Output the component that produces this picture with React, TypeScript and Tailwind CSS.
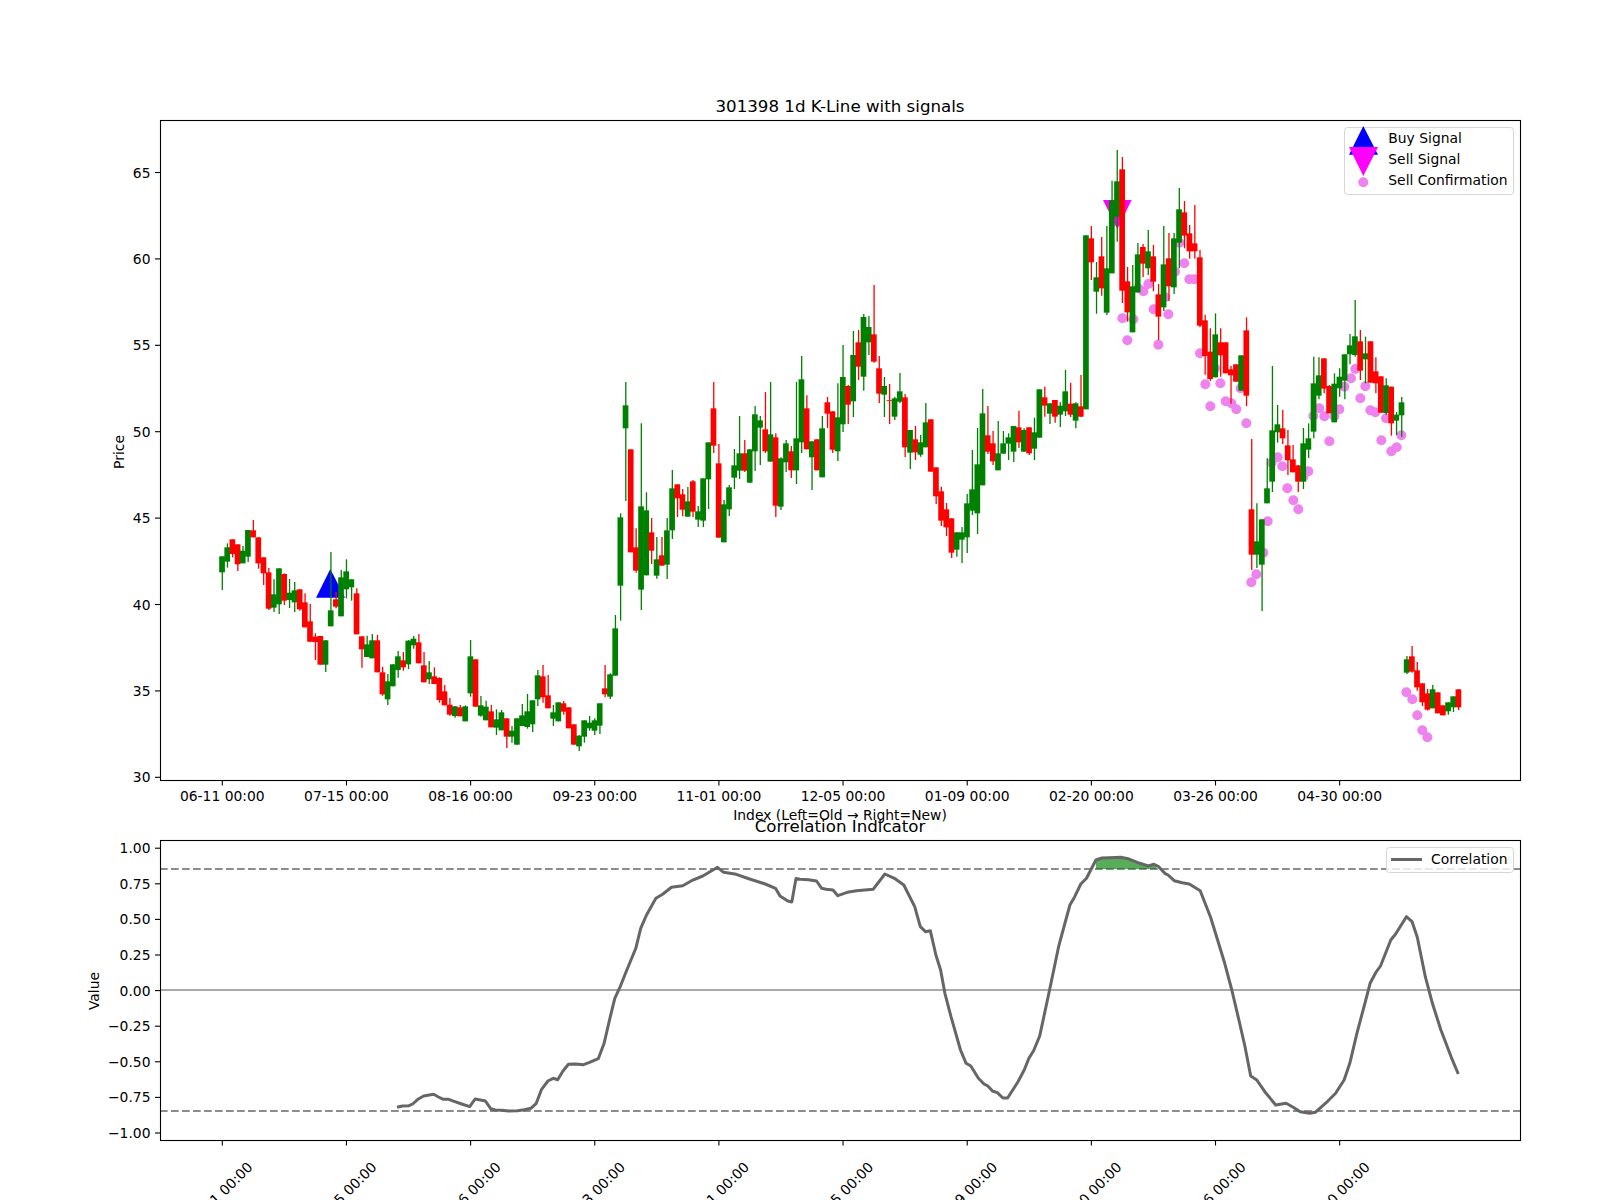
const X = (i: number) => 222.3 + 5.173 * i;

type Seg = [number, number, string];
const segs: Seg[] = [
  [480, 0, "g 229 229 277 330,g 190 202 245 263,r 178 178 222 232,r 193 193 253 273,g 198 212 250 250,g 150 150 230 246,r 120 151 172 172,r 172 172 250 266,r 232 232 280 315,r 264 277 386 390,g 298 343 383 396,g 265 265 373 402,r 280 282 362 375,g 297 338 360 384,g 306 331 367 396,r 328 328 388 392,r 340 367 442 442,r 372 424 485 487,r 460 470 486 540,r 468 468 554 554,g 480 481 554 576,g 216 391 439 439,r 336 358 380 385,g 270 292 409 409,g 238 274 328 355,g 298 298 322 362,r 325 340 463 463,r 469 469 508 563,g 467 493 531 531,g 462 481 535 535,r 465 481 577 577,r 561 577 643 647,g 582 604 658 675,g 553 553 619 619,g 513 529 570 593,r 516 541 562 572,g 480 482 553 567,g 468 476 496 506,r 462 487 550 550,r 516 556 607 607,g 543 577 598 612,r 562 589 612 612,r 592 594 660 668,r 615 634 676 676,r 654 674 704 707,g 678 679 708 713,r 675 682 709 709,g 676 679 724 724,g 480 529 640 650,r 538 538 680 680,g 648 676 707 710,g 662 680 721 721,r 675 694 742 742"],
  [640, 53, "g 208 238 263 285,g 210 217 271 271,r 235 235 290 324,g 258 272 290 308,g 235 235 314 314,g 192 226 258 258,g 162 214 261 266,g 181 181 253 276,g 90 106 178 198,r 75 109 172 188,r 105 166 205 205,g 195 217 236 258,g 187 187 244 244,r 183 190 215 224,r 202 202 265 265,r 253 253 314 314,g 285 287 319 333,g 241 241 290 308,g 228 248 265 272,g 235 241 272 285,g 190 190 257 282,r 75 145 163 172,g 100 103 170 177"],
  [340, 76, "g 825 865 1007 1007,g 520 532 737 842,g 126 196 265 483,r 328 328 637 637,r 565 622 692 698,g 250 499 749 810,g 457 511 706 706,r 534 577 632 672,g 591 658 707 716,r 591 646 677 677,g 534 571 674 717,g 390 445 571 597,r 433 433 475 531,r 447 463 509 529,g 441 484 530 530,r 420 424 515 531,g 498 514 539 561,g 415 415 542 561,g 307 307 418 507,r 126 205 317 339,r 312 370 593 593,g 480 493 607 607,g 435 442 508 528,g 327 376 413 447,g 228 340 392 417,r 300 340 392 396,g 328 328 428 428,g 198 223 334 393,g 228 241 263 375,r 156 268 334 339,g 126 283 365 365,r 280 292 497 531,g 352 355 500 510,g 300 310 367 396,r 318 334 391 414,g 126 295 391 432,g 48 118 307 339,r 166 205 328 328,g 304 304 352 450,r 298 298 391 391,g 228 265 412 412,r 171 187 221 264,r 214 214 329 339,g 130 232 334 363"],
  [280, 120, "g 195 291 433 456,r 315 318 374 432,g 153 225 364 411,r 150 187 260 300,g 102 111 290 332,g 108 141 187 225,r 15 163 245 248,r 228 265 341 369,g 291 318 344 411,r 312 360 362 432,g 350 355 410 420,g 279 334 365 369,r 342 352 502 531,g 450 450 518 567,r 438 478 517 540,g 465 487 524 530,g 369 427 502 502,r 418 418 575 575,r 562 562 649 672,r 620 634 722 738,r 669 688 742 768,r 715 715 818 834,g 757 757 809 830,g 741 757 779 849,g 642 670 772 819,g 510 628 692 705,g 444 553 700 762,g 327 400 616 616,r 378 466 515 522,r 453 490 544 555,g 423 520 571 571,g 453 490 521 521"],
  [370, 152, "g 190 202 221 270,g 168 168 245 276,r 122 172 217 234,g 175 180 245 245,r 172 172 250 255,g 143 187 236 270,g 58 58 203 203,r 50 82 107 140,g 100 100 131 162,r 90 90 140 158,g 97 107 134 171,g 0 64 124 138,r 38 101 134 141,g 97 100 152 175,r 15 109 140 141"],
  [120, 167, "g 346 346 868 868,r 318 355 427 480,g 426 472 515 581,r 351 409 505 527,g 318 445 578 585,g 182 241 460 460,g 90 184 290 365,r 111 148 512 549,r 441 484 577 605,g 435 499 637 637,g 369 403 517 517,r 372 381 431 471,g 330 394 445 465,r 375 409 485 514,r 492 523 590 660,g 318 433 562 573,r 339 415 499 543,g 339 355 502 522,g 204 268 368 445,r 243 277 347 385,r 315 340 394 416,r 255 370 394 416,r 390 412 617 622"],
  [120, 190, "r 584 601 708 764,r 625 695 777 783,g 580 643 772 772,r 625 667 706 770,r 667 667 760 760,r 738 748 766 851,r 733 733 785 785,g 706 706 812 812,r 592 631 827 858"],
  [400, 199, "r 117 328 464 510,g 310 424 464 504,g 358 358 494 633,g 175 265 310 310,g -102 91 245 276,g 15 73 97 128,r 30 85 115 132,r 90 136 181 225,r 135 178 217 217,r 196 196 245 276,g 84 130 245 267,g 70 115 149 174"],
  [120, 211, "g 710 790 935 955,g 712 766 827 838,r 715 715 806 820,r 795 798 880 880,g 760 791 907 907,g 745 770 805 830,g 703 703 782 838,g 642 676 703 733,g 540 649 705 710,r 630 664 752 780,g 650 700 718 790,r 664 664 788 788,r 712 754 790 820,r 769 769 878 878,g 775 796 879 884,r 800 800 910 947,g 876 884 902 945,g 831 847 886 950"],
  [400, 229, "g 768 778 818 822,r 738 769 815 818,r 786 811 862 872,r 850 850 907 918,r 867 880 929 932,g 855 868 925 925,r 877 877 940 940,r 916 916 946 946,g 907 907 934 944,g 889 889 922 936,r 868 868 922 930"],
];

const candles = segs.flatMap(([base, start, rows]) =>
  rows.split(",").map((row, n) => {
    const [c, hi, top, bot, lo] = row.split(" ");
    const y = (v: string) => base + Number(v) / 3;
    return { i: start + n, color: c === "g" ? "#008000" : "#ff0000", hi: y(hi), top: y(top), bot: y(bot), lo: y(lo) };
  }),
);

const dots: [number, number][] = [
  ...([[652,305],[667,595],[700,598],[682,661],[730,514],[745,492],[715,505],[761,568],[805,583],[775,674],[853,430],[868,478],[883,478],[825,455],[838,368],[795,532],[900,700]] as [number, number][]).map(([x, y]): [number, number] => [900 + x / 3, 120 + y / 3]),
  ...([[16,793],[61,790],[31,859],[77,844],[94,850],[109,868],[139,910],[45,745],[122,805],[340,888],[358,865],[373,889],[403,889],[418,868],[433,800],[453,775],[466,747],[496,799],[481,835],[511,871],[526,877],[558,895]] as [number, number][]).map(([x, y]): [number, number] => [1200 + x / 3, 120 + y / 3]),
  ...([[233,172],[215,188],[247,199],[325,214],[310,230],[262,265],[280,301],[295,328],[203,364],[190,458],[169,523],[154,547],[388,124],[544,121],[574,154],[590,142],[604,106],[619,877],[637,898],[652,946],[667,991],[682,1012]] as [number, number][]).map(([x, y]): [number, number] => [1200 + x / 3, 400 + y / 3]),
];

const z6: [number, number][] = [[710,982],[722,978],[737,977],[745,972],[757,958],[770,948],[792,943],[803,951],[814,958],[826,958],[838,964],[855,972],[873,980],[885,957],[897,960],[908,963],[920,986],[930,990],[945,991],[960,993],[980,992],[995,989],[1010,985],[1022,970],[1034,928],[1048,903],[1060,895],[1070,899],[1082,873],[1094,853],[1110,852],[1128,854],[1140,848],[1161,836],[1174,790],[1186,720],[1198,655],[1210,620],[1222,580],[1245,505],[1256,445],[1269,405],[1290,355],[1305,343],[1325,322],[1350,317],[1370,302],[1395,288],[1428,262],[1442,277],[1470,283],[1500,297],[1535,312],[1558,325],[1568,348]];
const mid: [number, number][] = [[787.8,901],[791.8,902],[796,878.6]];
const z7: [number, number][] = [[0,298],[18,299],[35,303],[46,325],[55,328],[70,330],[80,347],[100,337],[120,332],[155,328],[180,282],[200,295],[220,315],[243,380],[255,440],[266,455],[276,452],[288,525],[298,570],[307,640],[320,710],[340,810],[352,850],[362,858],[378,895],[390,912],[398,918],[408,933],[418,938],[430,954],[440,954],[462,905],[475,870],[485,835],[495,812],[508,768],[528,635],[548,500],[572,375],[582,350],[595,312],[607,295],[627,240],[640,234],[655,233],[680,232],[695,236],[720,250],[738,258],[750,253],[760,260],[773,280],[780,285],[793,302],[810,308],[825,312],[848,332],[870,412],[885,480],[900,550],[915,630],[930,720],[943,800],[955,888],[968,900],[985,935],[1008,975],[1030,970],[1045,982],[1060,995],[1080,1000],[1092,997],[1115,968],[1135,940],[1153,900],[1165,850],[1180,760],[1197,670],[1208,610],[1220,578],[1230,558],[1252,480],[1262,462],[1285,410],[1297,425],[1308,472],[1325,590],[1340,670],[1358,750],[1380,832],[1395,882]];

const X7 = (x: number) => 800 + x / 2.119;
const Y7 = (y: number) => 780 + y / 3;
const corr = [
  ...z6.map(([x, y]) => `${(80 + x / 2.24).toFixed(1)},${(780 + y / 3).toFixed(1)}`),
  ...mid.map(([x, y]) => `${x},${y}`),
  ...z7.map(([x, y]) => `${X7(x).toFixed(1)},${Y7(y).toFixed(1)}`),
].join(" ");
const greenFill = [[627,267],[627,240],[640,234],[655,233],[680,232],[695,236],[720,250],[738,258],[750,253],[757,267]]
  .map(([x, y]) => `${X7(x).toFixed(1)},${Y7(y).toFixed(1)}`).join(" ");
const redFill = [[1060,993],[1060,995],[1080,1000],[1092,997],[1096,993]]
  .map(([x, y]) => `${X7(x).toFixed(1)},${Y7(y).toFixed(1)}`).join(" ");

const dates = ["06-11 00:00", "07-15 00:00", "08-16 00:00", "09-23 00:00", "11-01 00:00", "12-05 00:00", "01-09 00:00", "02-20 00:00", "03-26 00:00", "04-30 00:00"];
const priceTicks = [30, 35, 40, 45, 50, 55, 60, 65];
const PY = (v: number) => 777.3 - (v - 30) * 17.28;
const corrTicks = ["1.00", "0.75", "0.50", "0.25", "0.00", "−0.25", "−0.50", "−0.75", "−1.00"];
const CY = (n: number) => 848.2 + n * 35.6;

export default function App() {
  return (
    <div className="w-[1600px] h-[1200px] bg-white overflow-hidden">
      <svg width="1600" height="1200" viewBox="0 0 1600 1200" className="block font-['DejaVu_Sans',sans-serif] text-[13.89px]">
        {/* price panel */}
        <text x="840" y="112" textAnchor="middle" className="text-[16.67px]">301398 1d K-Line with signals</text>
        {dots.map(([x, y], n) => <circle key={n} cx={x} cy={y} r="5" fill="#ee82ee" />)}
        <polygon points="330.3,569 316,597.7 345,597.7" fill="#0000ff" />
        <polygon points="1103,200 1131.7,200 1117.3,229" fill="#ff00ff" />
        {candles.map((c) => (
          <g key={c.i}>
            <line x1={X(c.i)} x2={X(c.i)} y1={c.hi} y2={c.lo} stroke={c.color} strokeWidth="1.3" />
            <rect x={X(c.i) - 3.1} y={c.top} width="5.7" height={Math.max(c.bot - c.top, 0.8)} fill={c.color} />
          </g>
        ))}
        <rect x="160.5" y="120.5" width="1360" height="660" fill="none" stroke="#000" strokeWidth="1.1" />
        {priceTicks.map((v) => (
          <g key={v}>
            <line x1="155" x2="160" y1={PY(v)} y2={PY(v)} stroke="#000" strokeWidth="1.1" />
            <text x="150.5" y={PY(v) + 5} textAnchor="end">{v}</text>
          </g>
        ))}
        {dates.map((d, n) => (
          <g key={d}>
            <line x1={X(n * 24)} x2={X(n * 24)} y1="781" y2="785.5" stroke="#000" strokeWidth="1.1" />
            <text x={X(n * 24)} y="801" textAnchor="middle">{d}</text>
          </g>
        ))}
        <text transform="translate(123.5 452) rotate(-90)" textAnchor="middle">Price</text>
        <text x="840" y="820" textAnchor="middle">Index (Left=Old → Right=New)</text>

        <rect x="1344.5" y="127.5" width="169" height="67" rx="3" fill="#ffffff" fillOpacity="0.8" stroke="#d6d6d6" />
        <polygon points="1363.3,126 1349,154.7 1378,154.7" fill="#0000ff" />
        <polygon points="1349,147 1378,147 1363.3,176" fill="#ff00ff" />
        <circle cx="1363.3" cy="182.3" r="5" fill="#ee82ee" />
        <text x="1388.3" y="143">Buy Signal</text>
        <text x="1388.3" y="164">Sell Signal</text>
        <text x="1388.3" y="185">Sell Confirmation</text>

        {/* correlation panel */}
        <text x="840" y="832" textAnchor="middle" className="text-[16.67px]">Correlation Indicator</text>
        <line x1="160" x2="1520" y1="869" y2="869" stroke="#8c8c8c" strokeWidth="2.08" strokeDasharray="7.7 3.3" />
        <line x1="160" x2="1520" y1="1111" y2="1111" stroke="#8c8c8c" strokeWidth="2.08" strokeDasharray="7.7 3.3" />
        <line x1="160" x2="1520" y1="990" y2="990" stroke="#aaaaaa" strokeWidth="2.08" />
        <polygon points={greenFill} fill="#008000" fillOpacity="0.65" />
        <polygon points={redFill} fill="#ff0000" fillOpacity="0.3" />
        <polyline points={corr} fill="none" stroke="#666666" strokeWidth="3" strokeLinejoin="round" />
        <rect x="160.5" y="840.5" width="1360" height="300" fill="none" stroke="#000" strokeWidth="1.1" />
        {corrTicks.map((t, n) => (
          <g key={t}>
            <line x1="155" x2="160" y1={CY(n)} y2={CY(n)} stroke="#000" strokeWidth="1.1" />
            <text x="150.5" y={CY(n) + 5} textAnchor="end">{t}</text>
          </g>
        ))}
        {dates.map((d, n) => (
          <g key={d}>
            <line x1={X(n * 24)} x2={X(n * 24)} y1="1141" y2="1145.5" stroke="#000" strokeWidth="1.1" />
            <text transform={`translate(${X(n * 24) + 1.2} 1198) rotate(-45)`} textAnchor="middle">{d}</text>
          </g>
        ))}
        <text transform="translate(98.5 991) rotate(-90)" textAnchor="middle">Value</text>

        <rect x="1386.5" y="847.5" width="127" height="25" rx="3" fill="#ffffff" fillOpacity="0.8" stroke="#d6d6d6" />
        <line x1="1391" x2="1422" y1="859.5" y2="859.5" stroke="#666666" strokeWidth="3" />
        <text x="1431" y="864">Correlation</text>
      </svg>
    </div>
  );
}
